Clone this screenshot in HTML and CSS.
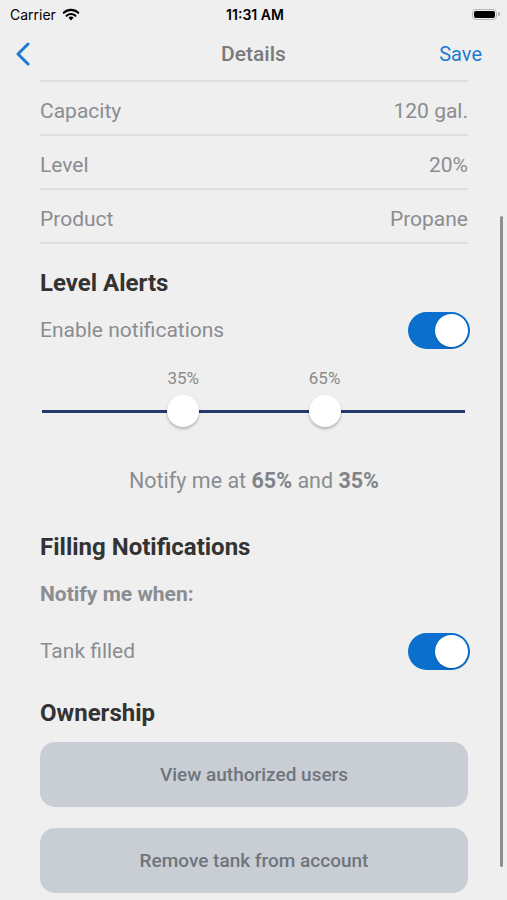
FILE: index.html
```html
<!DOCTYPE html>
<html lang="en">
<head>
    <meta charset="UTF-8">
    <meta name="viewport" content="width=device-width, initial-scale=1.0">
    <title>Details</title>
    <link rel="stylesheet" href="styles.css">
</head>
<body>
    <div class="status-bar">
        <div class="carrier">
            Carrier
            <svg class="wifi" width="18" height="13" viewBox="0 0 18 13">
                <path d="M9 12.5 L6.4 9.6 A3.8 3.8 0 0 1 11.6 9.6 Z" fill="#000"/>
                <path d="M4.6 7.7 A6.4 6.4 0 0 1 13.4 7.7" stroke="#000" stroke-width="2.1" fill="none" stroke-linecap="round"/>
                <path d="M1.8 4.8 A10.3 10.3 0 0 1 16.2 4.8" stroke="#000" stroke-width="2.1" fill="none" stroke-linecap="round"/>
            </svg>
        </div>
        <div class="clock">11:31 AM</div>
        <div class="battery">
            <span class="battery-body"><span class="battery-fill"></span></span>
            <span class="battery-cap"></span>
        </div>
    </div>

    <div class="nav-bar">
        <svg class="back" width="16" height="24" viewBox="0 0 16 24">
            <path d="M13 2 L3 12 L13 22" stroke="#1f7ad0" stroke-width="3" fill="none" stroke-linecap="round" stroke-linejoin="round"/>
        </svg>
        <div class="nav-title">Details</div>
        <div class="nav-action">Save</div>
    </div>

    <div class="content">
        <div class="info-list">
            <div class="info-row"><span>Capacity</span><span>120 gal.</span></div>
            <div class="info-row"><span>Level</span><span>20%</span></div>
            <div class="info-row"><span>Product</span><span>Propane</span></div>
        </div>

        <h2 class="section-title level">Level Alerts</h2>
        <div class="toggle-row">
            <span>Enable notifications</span>
            <span class="toggle"><span class="knob"></span></span>
        </div>

        <div class="range">
            <div class="range-track">
                <div class="range-thumb" style="left: 33.4%"><span class="range-label">35%</span></div>
                <div class="range-thumb" style="left: 66.8%"><span class="range-label">65%</span></div>
            </div>
        </div>

        <p class="range-summary">Notify me at <b>65%</b> and <b>35%</b></p>

        <h2 class="section-title filling">Filling Notifications</h2>
        <p class="subhead">Notify me when:</p>
        <div class="toggle-row filled">
            <span>Tank filled</span>
            <span class="toggle"><span class="knob"></span></span>
        </div>

        <h2 class="section-title ownership">Ownership</h2>
        <button type="button" class="action-btn">View authorized users</button>
        <button type="button" class="action-btn">Remove tank from account</button>
    </div>

    <div class="scroll-indicator"></div>
</body>
</html>
```

FILE: styles.css
```css
body {
    margin: 0;
    height: 900px;
    overflow: hidden;
    background-color: #efefef;
    font-family: Roboto, 'Liberation Sans', sans-serif;
    position: relative;
}

.status-bar {
    height: 28px;
    display: flex;
    align-items: center;
    justify-content: space-between;
    padding: 0 7px 0 10px;
    font-family: Inter, 'Liberation Sans', sans-serif;
    color: #000;
}

.carrier {
    display: flex;
    align-items: center;
    gap: 6px;
    font-size: 14px;
    width: 120px;
}

.clock {
    font-size: 14px;
    font-weight: 600;
}

.battery {
    width: 120px;
    display: flex;
    justify-content: flex-end;
    align-items: center;
    gap: 1px;
}

.battery-body {
    width: 25px;
    height: 11px;
    border: 1px solid #b5b5b5;
    border-radius: 4px;
    padding: 1px;
    box-sizing: border-box;
    display: flex;
}

.battery-fill {
    flex: 1;
    background-color: #000;
    border-radius: 2px;
}

.battery-cap {
    width: 2px;
    height: 4px;
    background-color: #b5b5b5;
    border-radius: 0 1px 1px 0;
}

.nav-bar {
    height: 52px;
    display: flex;
    align-items: center;
    justify-content: space-between;
    padding: 0 25px 0 15px;
    position: relative;
}

.back {
    display: block;
}

.nav-title {
    position: absolute;
    left: 0;
    right: 0;
    text-align: center;
    font-size: 21px;
    font-weight: 500;
    color: #7a7a7a;
    pointer-events: none;
}

.nav-action {
    font-size: 20px;
    color: #1f7ad0;
}

.content {
    padding: 0 39px 0 40px;
}

.info-list {
    border-top: 2px solid #dedede;
}

.info-row {
    height: 54px;
    box-sizing: border-box;
    padding-top: 6px;
    display: flex;
    align-items: center;
    justify-content: space-between;
    border-bottom: 2px solid #dedede;
    font-size: 21px;
    color: #8a8d91;
}

.section-title {
    margin: 0;
    height: 28px;
    line-height: 28px;
    font-size: 24px;
    font-weight: 700;
    color: #333333;
}

.section-title.level {
    margin-top: 25px;
}

.section-title.filling {
    margin-top: 39px;
}

.section-title.ownership {
    margin-top: 28px;
}

.toggle-row {
    height: 40px;
    margin-top: 13px;
    margin-right: -2px;
    display: flex;
    align-items: center;
    justify-content: space-between;
    font-size: 21px;
    color: #8a8d91;
}

.toggle-row.filled {
    margin-top: 25px;
}

.toggle {
    width: 62px;
    height: 37px;
    border-radius: 19px;
    background-color: #0b6fcd;
    display: flex;
    justify-content: flex-end;
    align-items: center;
    padding: 2px;
    box-sizing: border-box;
}

.knob {
    width: 33px;
    height: 33px;
    border-radius: 50%;
    background-color: #ffffff;
    box-shadow: 0 1px 2px rgba(0, 0, 0, 0.2);
}

.range {
    margin-top: 60px;
    padding: 0 3px 0 2px;
}

.range-track {
    position: relative;
    height: 3px;
    background-color: #24386b;
}

.range-thumb {
    position: absolute;
    top: -15px;
    width: 32px;
    height: 32px;
    margin-left: -16px;
    border-radius: 50%;
    background-color: #ffffff;
    box-shadow: 0 2px 3px rgba(0, 0, 0, 0.25);
}

.range-label {
    position: absolute;
    bottom: 39px;
    left: -14px;
    right: -14px;
    text-align: center;
    font-size: 17px;
    color: #8a8a8a;
    line-height: 20px;
}

.range-summary {
    margin: 55px 0 0;
    text-align: center;
    font-size: 21.5px;
    line-height: 26px;
    color: #8a8d91;
}

.range-summary b {
    color: #808387;
}

.subhead {
    margin: 21px 0 0;
    font-size: 21px;
    font-weight: 700;
    line-height: 24px;
    color: #8a8d91;
}

.action-btn {
    display: block;
    width: 100%;
    height: 65px;
    border: none;
    border-radius: 15px;
    background-color: #c9ced5;
    font-family: Roboto, 'Liberation Sans', sans-serif;
    font-size: 19px;
    font-weight: 500;
    color: #6f757d;
    margin-top: 21px;
}

.ownership + .action-btn {
    margin-top: 15px;
}

.scroll-indicator {
    position: absolute;
    top: 216px;
    right: 4px;
    width: 3px;
    height: 651px;
    border-radius: 2px;
    background-color: #8e8e8e;
}
```
